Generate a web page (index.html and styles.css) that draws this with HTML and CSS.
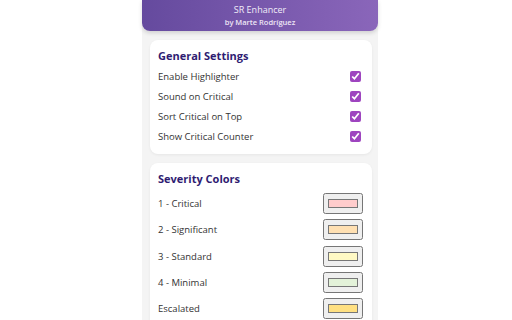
FILE: index.html
```html
<!DOCTYPE html>
<html lang="en">
<head>
  <meta charset="UTF-8" />
  <title>SR Enhancer</title>
  <link rel="stylesheet" href="styles.css">
</head>
<body>
  <div class="popup">
    <div class="header">
      <div class="app-name">SR Enhancer</div>
      <div class="author">by Marte Rodríguez</div>
    </div>

    <div class="card">
      <h2>General Settings</h2>
      <div class="setting-row">
        <label for="highlighter">Enable Highlighter</label>
        <input type="checkbox" id="highlighter" checked>
      </div>
      <div class="setting-row">
        <label for="sound">Sound on Critical</label>
        <input type="checkbox" id="sound" checked>
      </div>
      <div class="setting-row">
        <label for="sortTop">Sort Critical on Top</label>
        <input type="checkbox" id="sortTop" checked>
      </div>
      <div class="setting-row">
        <label for="counter">Show Critical Counter</label>
        <input type="checkbox" id="counter" checked>
      </div>
    </div>

    <div class="card">
      <h2>Severity Colors</h2>
      <div class="color-row">
        <label for="sev1">1 - Critical</label>
        <input type="color" id="sev1" value="#ffcccc">
      </div>
      <div class="color-row">
        <label for="sev2">2 - Significant</label>
        <input type="color" id="sev2" value="#ffe0b2">
      </div>
      <div class="color-row">
        <label for="sev3">3 - Standard</label>
        <input type="color" id="sev3" value="#fff9c4">
      </div>
      <div class="color-row">
        <label for="sev4">4 - Minimal</label>
        <input type="color" id="sev4" value="#e3f2d9">
      </div>
      <div class="color-row">
        <label for="escalated">Escalated</label>
        <input type="color" id="escalated" value="#ffe082">
      </div>
    </div>
  </div>
</body>
</html>
```

FILE: styles.css
```css
/* ---------- base ---------- */
body {
  margin: 0;
  padding: 0;
  font-family: "Open Sans", "Noto Sans", sans-serif;
  background: #fff;
}
.popup {
  width: 236px;
  margin-left: 142px;
  min-height: 100vh;
  background: #f4f4f4;
  padding-bottom: 10px;
}
/* ----- header ----- */
.header {
  background: linear-gradient(to right, #654a9e, #8a66ba);
  color: #fff;
  text-align: center;
  border-radius: 0 0 8px 8px;
  box-shadow: 0 2px 4px rgba(0, 0, 0, 0.15);
  padding: 3px 0 3px;
}
.app-name {
  font-size: 9px;
  line-height: 14px;
  color: #f1ecf8;
}
.author {
  font-size: 7.5px;
  line-height: 11px;
  font-weight: 600;
  color: #eee6f6;
}
/* ----- cards ----- */
.card {
  background: #fff;
  border-radius: 8px;
  box-shadow: 0 1px 3px rgba(0, 0, 0, 0.06);
  margin: 9px 6px 8px 8px;
  padding: 8px 9px 8px 8px;
}
.card h2 {
  margin: 0 0 3px;
  font-size: 11px;
  line-height: 16px;
  font-weight: 700;
  color: #2f1c72;
}
.setting-row,
.color-row {
  display: flex;
  justify-content: space-between;
  align-items: center;
  font-size: 9.5px;
  color: #333;
}
.setting-row {
  height: 19.8px;
}
.color-row {
  height: 26.4px;
}
.setting-row input[type="checkbox"] {
  width: 11px;
  height: 11px;
  margin: 0 2px 0 0;
  accent-color: #9e45bf;
}
.color-row input[type="color"] {
  width: 40px;
  height: 21px;
  margin: 0;
  cursor: pointer;
}
```
